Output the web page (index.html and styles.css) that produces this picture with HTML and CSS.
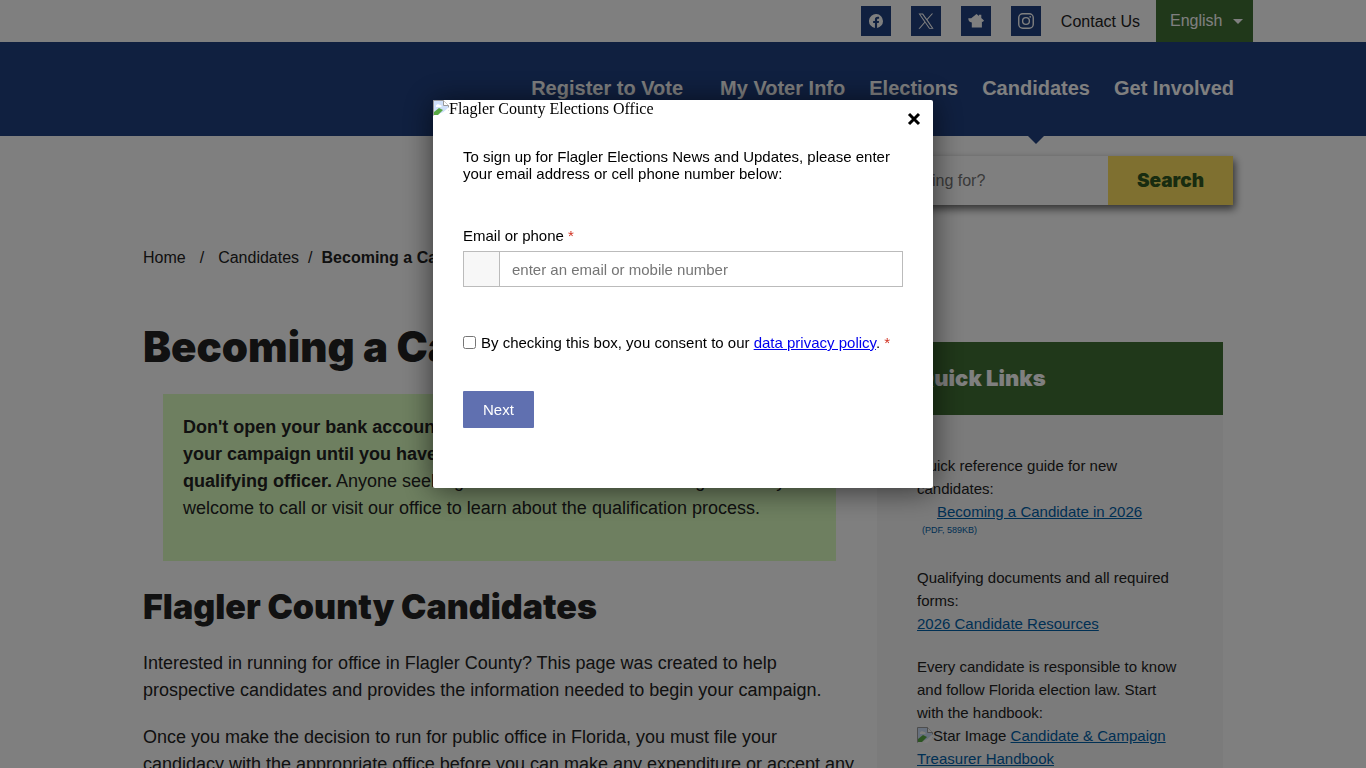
FILE: index.html
```html
<!DOCTYPE html>
<html lang="en">
<head>
    <meta charset="UTF-8">
    <meta name="viewport" content="width=device-width, initial-scale=1.0">
    <title>Becoming a Candidate - Flagler County Elections</title>
    <link rel="stylesheet" href="styles.css">
</head>
<body>
    <div class="topbar">
        <div class="wrap topbar-inner">
            <a class="social" href="#" aria-label="Facebook">
                <svg width="14" height="14" viewBox="0 0 16 16"><path fill="#fff" d="M16 8.05a8 8 0 1 0-9.25 7.95v-5.62H4.72V8.05h2.03V6.28c0-2 1.2-3.13 3.02-3.13.88 0 1.8.16 1.8.16v1.98h-1.02c-1 0-1.3.62-1.3 1.26v1.5h2.22l-.35 2.33H9.25V16A8 8 0 0 0 16 8.05z"/></svg>
            </a>
            <a class="social" href="#" aria-label="X">
                <svg width="16" height="16" viewBox="0 0 16 16"><path fill="#fff" d="M9.5 6.8 15.1.4h-1.3L8.9 6 5 .4H.5l5.9 8.5-5.9 6.8h1.3l5.2-6 4.1 6h4.5L9.5 6.8zM7.6 8.9l-.6-.8L2.3 1.4h2l3.9 5.500.6.9 5 7.1h-2L7.6 8.9z"/></svg>
            </a>
            <a class="social" href="#" aria-label="Nextdoor">
                <svg width="16" height="16" viewBox="0 0 16 16"><path fill="#fff" d="M8.500 1 11 3V1.800h2.300v3.200L16 7.400l-1.200 1.600-.9-.6v6H3.800V9.400C1.400 9.200.3 7.600.3 5.200h2.900L8.500 1z"/></svg>
            </a>
            <a class="social" href="#" aria-label="Instagram">
                <svg width="16" height="16" viewBox="0 0 16 16" fill="none" stroke="#fff" stroke-width="1.4"><rect x=".75" y=".75" width="14.5" height="14.5" rx="4"/><circle cx="8" cy="8" r="3.4"/><circle cx="12.2" cy="3.8" r=".9" fill="#fff" stroke="none"/></svg>
            </a>
            <a class="contact" href="#">Contact Us</a>
            <div class="language">
                <select aria-label="Language">
                    <option>English</option>
                    <option>Español</option>
                </select>
            </div>
        </div>
    </div>

    <header class="header">
        <nav class="wrap nav">
            <a class="first" href="#">Register to Vote</a>
            <a href="#">My Voter Info</a>
            <a href="#">Elections</a>
            <a class="active" href="#">Candidates</a>
            <a href="#">Get Involved</a>
        </nav>
    </header>

    <div class="wrap search-row">
        <form class="search">
            <input type="text" aria-label="Search" placeholder="What are you looking for?">
            <button type="button">Search</button>
        </form>
    </div>

    <div class="content">
        <div class="breadcrumb">
            <a href="#">Home</a><span class="sep">/</span><a href="#">Candidates</a><span class="sep last">/</span><strong>Becoming a Candidate</strong>
        </div>
        <div class="columns">
            <main class="main">
                <h1>Becoming a Candidate</h1>
                <div class="notice">
                    <strong>Don't open your bank account or spend money on<br>
                    your campaign until you have filed with your<br>
                    qualifying officer.</strong> Anyone seeking further information on running is warmly<br>
                    welcome to call or visit our office to learn about the qualification process.
                </div>
                <h2>Flagler County Candidates</h2>
                <p>Interested in running for office in Flagler County? This page was created to help prospective candidates and provides the information needed to begin your campaign.</p>
                <p>Once you make the decision to run for public office in Florida, you must file your candidacy with the appropriate office before you can make any expenditure or accept any contributions.</p>
            </main>
            <aside class="sidebar">
                <h3>Quick Links</h3>
                <div class="links">
                    <p>Quick reference guide for new candidates:<br>
                    <a class="doc" href="#">Becoming a Candidate in 2026</a>
                    <a class="size" href="#">(PDF, 589KB)</a></p>
                    <p>Qualifying documents and all required forms:<br>
                    <a href="#">2026 Candidate Resources</a></p>
                    <p>Every candidate is responsible to know and follow Florida election law. Start with the handbook:<br>
                    <svg class="missing" width="16" height="16" viewBox="0 0 16 16"><path d="M.5 15.5V.5h10l5 5v5" fill="#cfe0fa" stroke="#9a9a9a"/><path d="M10.5.5v5h5" fill="#fff" stroke="#9a9a9a"/><path d="M3 6c0-2 3-2.5 4-1 2 0 2 2 1 2H3z" fill="#fff"/><path d="M1 15v-3l5-4 4 2-5 5z" fill="#58a944"/><path d="m6 16 10-9v3l-6 6z" fill="#fff"/></svg>Star Image <a href="#">Candidate &amp; Campaign Treasurer Handbook</a></p>
                </div>
            </aside>
        </div>
    </div>

    <div class="overlay">
        <div class="modal" role="dialog" aria-label="Sign up for news and updates">
            <div class="logo">
                <svg class="missing" width="16" height="16" viewBox="0 0 16 16"><path d="M.5 15.5V.5h10l5 5v5" fill="#cfe0fa" stroke="#9a9a9a"/><path d="M10.5.5v5h5" fill="#fff" stroke="#9a9a9a"/><path d="M3 6c0-2 3-2.5 4-1 2 0 2 2 1 2H3z" fill="#fff"/><path d="M1 15v-3l5-4 4 2-5 5z" fill="#58a944"/><path d="m6 16 10-9v3l-6 6z" fill="#fff"/></svg>Flagler County Elections Office
            </div>
            <button class="close" type="button" aria-label="Close">
                <svg width="14" height="14" viewBox="0 0 14 14"><path d="m2 2 10 10m0-10-10 10" stroke="#000" stroke-width="3"/></svg>
            </button>
            <form class="signup">
                <p>To sign up for Flagler Elections News and Updates, please enter your email address or cell phone number below:</p>
                <label for="contact">Email or phone <span class="required">*</span></label>
                <div class="field">
                    <span class="flag"></span>
                    <input type="text" id="contact" placeholder="enter an email or mobile number">
                </div>
                <div class="consent">
                    <input type="checkbox" id="consent">
                    <label for="consent">By checking this box, you consent to our <a href="#">data privacy policy</a>. <span class="required">*</span></label>
                </div>
                <button class="next" type="button">Next</button>
            </form>
        </div>
    </div>
</body>
</html>
```
FILE: styles.css
```css
* {
    box-sizing: border-box;
}
body {
    margin: 0;
    font-family: "Liberation Sans", Arial, sans-serif;
    font-size: 18px;
    line-height: 27px;
    color: #222;
    background-color: #fff;
}
.wrap {
    max-width: 1140px;
    margin: 0 auto;
}

/* top bar */
.topbar-inner {
    display: flex;
    justify-content: flex-end;
    align-items: center;
    height: 42px;
    font-size: 16px;
}
.social {
    display: flex;
    align-items: center;
    justify-content: center;
    width: 30px;
    height: 30px;
    margin-right: 20px;
    background-color: #204080;
}
.contact {
    margin-right: 16px;
    color: #222;
    text-decoration: none;
}
.language {
    position: relative;
    height: 42px;
    background-color: #407034;
}
.language::after {
    content: "";
    position: absolute;
    right: 10px;
    top: 19px;
    border: 5px solid transparent;
    border-top-color: #fff;
    border-bottom: 0;
    pointer-events: none;
}
.language select {
    appearance: none;
    width: 97px;
    height: 42px;
    padding: 0 14px 2px;
    border: 0;
    background: none;
    color: #fff;
    font: 16px "Liberation Sans", Arial, sans-serif;
}

/* main menu */
.header {
    background-color: #204080;
}
.nav {
    display: flex;
    justify-content: flex-end;
    gap: 24px;
    height: 94px;
    padding-right: 19px;
}
.nav a {
    position: relative;
    color: #fff;
    font-size: 20px;
    font-weight: bold;
    line-height: 92px;
    text-decoration: none;
}
.nav .first {
    margin-right: 13px;
}
.nav .active::after {
    content: "";
    position: absolute;
    left: 50%;
    top: 100%;
    margin-left: -8px;
    border: 8px solid transparent;
    border-top-color: #204080;
    border-bottom: 0;
}

/* search */
.search-row {
    display: flex;
    justify-content: flex-end;
    padding: 20px 20px 0 0;
}
.search {
    display: flex;
    height: 49px;
    box-shadow: 2px 4px 8px rgba(0, 0, 0, 0.6);
}
.search input {
    width: 320px;
    padding: 0 15px;
    border: 0;
    background-color: #fff;
    font: 16px "Liberation Sans", Arial, sans-serif;
}
.search button {
    width: 125px;
    border: 0;
    background-color: #ffe060;
    color: #305820;
    font: 900 19px Inter, sans-serif;
}

/* page content */
.content {
    max-width: 1080px;
    margin: 0 auto;
    padding-top: 39px;
}
.breadcrumb {
    font-size: 16px;
}
.breadcrumb a {
    color: #222;
    text-decoration: none;
}
.sep {
    margin: 0 14px;
}
.sep.last {
    margin: 0 9px;
}
.columns {
    display: flex;
    align-items: flex-start;
    gap: 20px;
}
.main {
    flex: 1;
}
h1, h2, h3 {
    margin: 0;
    font-family: Inter, sans-serif;
    font-weight: 900;
}
h1 {
    padding: 52px 0 23px;
    font-size: 42px;
    line-height: 48px;
}
h2 {
    margin: 25px 0 22px;
    font-size: 34px;
    line-height: 42px;
}
.notice {
    margin: 0 21px 0 20px;
    padding: 20px 20px 39px;
    background-color: #dcffc0;
    white-space: nowrap;
}
.main p {
    margin: 0 0 20px;
}
.sidebar {
    width: 346px;
    margin-top: 71px;
    background-color: #f6f6f6;
    font-size: 15px;
    line-height: 23px;
}
.sidebar h3 {
    padding: 24px 40px;
    background-color: #407034;
    color: #fff;
    font-size: 22px;
    line-height: 25px;
}
.links {
    padding: 39px 40px;
}
.links p {
    margin: 0 0 20px;
}
.links a {
    color: #0060a8;
}
.links .doc {
    margin-left: 20px;
}
.links .size {
    display: block;
    padding: 1px 5px 9px;
    font-size: 9px;
    line-height: 13px;
    text-decoration: none;
}
.missing {
    vertical-align: text-top;
}

/* sign up popup */
.overlay {
    position: fixed;
    inset: 0;
    padding-top: 100px;
    background-color: rgba(0, 0, 0, 0.5);
}
.modal {
    position: relative;
    width: 500px;
    margin: 0 auto;
    border-radius: 2px;
    background-color: #fff;
    box-shadow: 0 2px 30px rgba(0, 0, 0, 0.6);
    color: #000;
    font-size: 15px;
    line-height: 17px;
}
.logo {
    font: 16px/18px "Liberation Serif", "Times New Roman", serif;
}
.close {
    position: absolute;
    right: 11px;
    top: 11px;
    display: flex;
    padding: 1px;
    border: 0;
    background: none;
}
.signup {
    padding: 30px 30px 60px;
}
.signup p {
    margin: 0 0 45px;
}
.required {
    color: #d03020;
}
.field {
    display: flex;
    height: 36px;
    margin: 7px 0 47px;
    border: 1px solid #bbb;
}
.flag {
    width: 36px;
    border-right: 1px solid #bbb;
    background-color: #f7f7f7;
}
.field input {
    flex: 1;
    padding: 0 12px;
    border: 0;
    font: 15px "Liberation Sans", Arial, sans-serif;
}
.consent {
    display: flex;
    align-items: center;
    gap: 5px;
    margin-bottom: 40px;
}
.consent input {
    margin: 0;
}
.consent a {
    color: #0000ee;
}
.next {
    display: block;
    height: 37px;
    padding: 0 20px;
    border: 0;
    border-radius: 1px;
    background-color: #6070b0;
    color: #fff;
    font: 15px "Liberation Sans", Arial, sans-serif;
}
```
